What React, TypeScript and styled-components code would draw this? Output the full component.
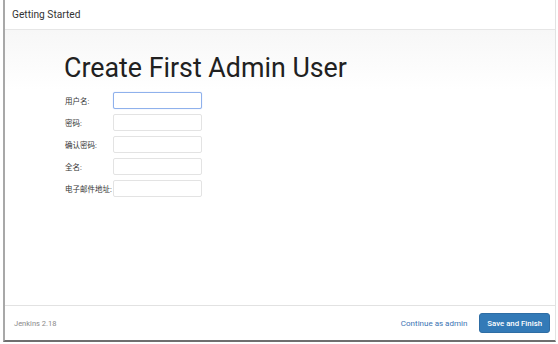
import React from 'react';
import styled, { createGlobalStyle } from 'styled-components';

const GlobalStyle = createGlobalStyle`
  html, body {
    margin: 0;
    padding: 0;
    background: #ffffff;
  }
  body {
    font-family: Roboto, "Noto Sans CJK SC", "Liberation Sans", sans-serif;
  }
`;

const Frame = styled.div`
  box-sizing: border-box;
  margin-left: 3px;
  width: 553px;
  height: 342px;
  border-left: 2px solid #a8a8a8;
  border-bottom: 2px solid #6f6f6f;
  border-right: 1px solid #e2e2e2;
  display: flex;
  flex-direction: column;
  background: #fff;
`;

const Header = styled.div`
  height: 30px;
  box-sizing: border-box;
  border-bottom: 1px solid #e6e6e6;
  display: flex;
  align-items: center;
  padding-left: 7px;
  font-size: 10.2px;
  color: #333;
`;

const Body = styled.div`
  flex: 1;
  background: linear-gradient(#f7f7f7, #ffffff 60px);
  padding: 22px 0 0 59px;
`;

const Title = styled.h1`
  margin: 0 0 8px 0;
  font-weight: 400;
  font-size: 26.8px;
  line-height: 32px;
  color: #212121;
`;

const Form = styled.div`
  display: flex;
  flex-direction: column;
  gap: 5px;
  padding-left: 1px;
`;

const Row = styled.label`
  display: flex;
  align-items: center;
  height: 17px;
`;

const Label = styled.span`
  width: 48px;
  font-size: 7.5px;
  color: #333;
  white-space: nowrap;
`;

const Input = styled.input<{ $focused?: boolean }>`
  box-sizing: border-box;
  width: 89px;
  height: 17px;
  margin: 0;
  padding: 0 4px;
  border: 1px solid ${(p) => (p.$focused ? '#8fb1ec' : '#e3e3e3')};
  border-radius: 2px;
  background: #fff;
  outline: none;
  box-shadow: ${(p) => (p.$focused ? '0 0 1px #a9c3f2' : 'none')};
`;

const Footer = styled.div`
  height: 34px;
  border-top: 1px solid #e2e2e2;
  display: flex;
  align-items: center;
  padding: 0 5px 0 9px;
`;

const Version = styled.span`
  font-size: 7.5px;
  color: #8a8a8a;
  flex: 1;
`;

const LinkButton = styled.a`
  font-size: 8px;
  color: #3b73b3;
  margin-right: 12px;
  text-decoration: none;
`;

const PrimaryButton = styled.button`
  height: 20px;
  padding: 0 7px;
  border: 1px solid #2e6da4;
  border-radius: 3px;
  background: #337ab7;
  color: #fff;
  font-family: Roboto, "Liberation Sans", sans-serif;
  font-size: 7.8px;
  font-weight: 500;
`;

const fields = ['用户名:', '密码:', '确认密码:', '全名:', '电子邮件地址:'];

export default function App() {
  return (
    <>
      <GlobalStyle />
      <Frame>
        <Header>Getting Started</Header>
        <Body>
          <Title>Create First Admin User</Title>
          <Form>
            {fields.map((f, i) => (
              <Row key={f}>
                <Label>{f}</Label>
                <Input $focused={i === 0} type={i === 1 || i === 2 ? 'password' : 'text'} />
              </Row>
            ))}
          </Form>
        </Body>
        <Footer>
          <Version>Jenkins 2.18</Version>
          <LinkButton>Continue as admin</LinkButton>
          <PrimaryButton>Save and Finish</PrimaryButton>
        </Footer>
      </Frame>
    </>
  );
}
